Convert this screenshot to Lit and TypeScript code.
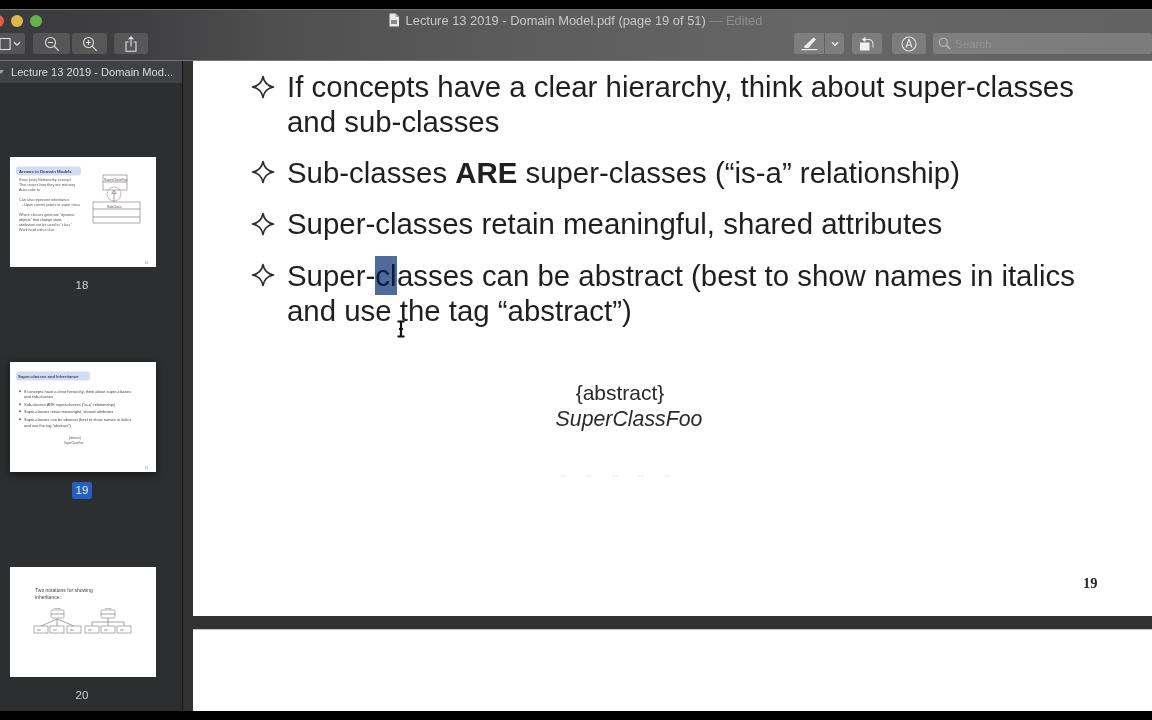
import { LitElement, html, css, svg } from "lit";
import { customElement } from "lit/decorators.js";

const star = html`<svg class="star" width="24" height="24" viewBox="0 0 24 24"><path d="M12 1.500Q13.600 10.400 22.500 12Q13.600 13.600 12 22.500Q10.400 13.600 1.500 12Q10.400 10.400 12 1.500Z" fill="none" stroke="#2b2b2b" stroke-width="1.600" stroke-linejoin="round"/></svg>`;

const box = (x: number, y: number, w: number, h: number, c = "#8b8b8b") =>
  svg`<rect x=${x} y=${y} width=${w} height=${h} fill="none" stroke=${c} stroke-width=".7"/>`;
const line = (x1: number, y1: number, x2: number, y2: number, c = "#7d7d7d") =>
  svg`<line x1=${x1} y1=${y1} x2=${x2} y2=${y2} stroke=${c} stroke-width=".7"/>`;
const t = (x: number, y: number, s: string, size = 3.9, fill = "#555", extra = "") =>
  svg`<text x=${x} y=${y} font-size=${size} fill=${fill} font-family="Liberation Sans, sans-serif" font-weight=${extra || "normal"}>${s}</text>`;

const thumb18 = svg`<svg class="thumb-art" width="146" height="110" viewBox="0 0 146 110">
  <rect x="6" y="9.500" width="65" height="9" rx="3" fill="#d3dcf2"/>
  ${t(9, 15.500, "Arrows in Domain Models", 4.3, "#3b4560", "bold")}
  ${t(9, 24, "Keep (use) Noteworthy concept", 3.7)}
  ${t(9, 29, "That reuses how they are text way", 3.7)}
  ${t(9, 34, "Auto-color to", 3.7)}
  ${t(9, 44, "Can also represent inheritance", 3.7)}
  ${t(12, 49, "- Upon correct points to super class", 3.7)}
  ${t(9, 59, "Where classes generate \u201Cdynamic", 3.7)}
  ${t(9, 64, "objects\u201D that change state,", 3.7, "#444")}
  ${t(9, 69, "attribution not be used to \u201Cclass\u201D", 3.7)}
  ${t(9, 74, "Work hard with a Use", 3.7)}
  ${box(93, 18, 24, 15)}
  ${t(94, 23.500, "SuperClassFoo", 3.400, "#555")}
  ${line(93, 25, 117, 25)}
  <circle cx="104" cy="37" r="7" fill="none" stroke="#c8a09a" stroke-width=".8"/>
  ${line(104, 33, 104, 45)}
  <path d="M101.500 36.500h5l-2.500-3z" fill="none" stroke="#777" stroke-width=".6"/>
  ${box(83, 45, 47, 21)}
  ${t(97, 50.500, "SubClass", 3.400)}
  ${line(83, 52, 130, 52)}
  ${line(83, 60, 130, 60)}
  ${t(135, 107, "18", 2.600, "#777")}
</svg>`;

const thumb19 = svg`<svg class="thumb-art" width="146" height="110" viewBox="0 0 146 110">
  <rect x="6" y="9.500" width="74" height="9" rx="3" fill="#d3dcf2"/>
  ${t(8, 15.500, "Super-classes and Inheritance", 4.200, "#3b4560", "bold")}
  ${[30, 43, 50, 58].map((y) => svg`<path d=${`M10 ${y - 2}l1.200 1.200-1.200 1.200-1.200-1.200z`} fill="#666"/>`)}
  ${t(14, 31, "If concepts have a clear hierarchy, think about super-classes", 4, "#444")}
  ${t(14, 36, "and sub-classes", 4, "#444")}
  ${t(14, 44, "Sub-classes ARE super-classes (\u201Cis-a\u201D relationship)", 4, "#444")}
  ${t(14, 51, "Super-classes retain meaningful, shared attributes", 4, "#444")}
  ${t(14, 59, "Super-classes can be abstract (best to show names in italics", 4, "#444")}
  ${t(14, 64.500, "and use the tag \u201Cabstract\u201D)", 4, "#444")}
  ${t(59, 77, "{abstract}", 2.800, "#555")}
  ${t(54, 82, "SuperClassFoo", 2.800, "#555")}
  ${t(135, 107, "19", 2.600, "#777")}
</svg>`;

const thumb20 = svg`<svg class="thumb-art" width="146" height="110" viewBox="0 0 146 110">
  ${t(25, 25, "Two notations for showing", 5, "#444")}
  ${t(25, 31.500, "inheritance:", 5, "#444")}
  <rect x="41" y="43" width="13" height="8" rx="1.500" fill="none" stroke="#8b8b8b" stroke-width=".7"/>
  <rect x="91" y="43" width="14" height="8" rx="1.500" fill="none" stroke="#8b8b8b" stroke-width=".7"/>
  ${t(43, 42, "Animal", 2.400)}
  ${t(94, 42, "Animal", 2.400)}
  ${line(41, 47, 54, 47)}
  ${line(91, 47, 105, 47)}
  ${line(47, 52, 31, 59)}
  ${line(47, 52, 47, 59)}
  ${line(47, 52, 64, 59)}
  ${line(98, 51, 98, 55)}
  ${line(82, 55, 114, 55)}
  ${line(82, 55, 82, 59)}
  ${line(98, 55, 98, 59)}
  ${line(114, 55, 114, 59)}
  ${[24, 40, 57, 75, 91, 107].map((x) => svg`${box(x, 59, 14, 7)}${t(x + 3, 64, "cat", 2.600, "#666")}`)}
</svg>`;

@customElement("app-root")
export class AppRoot extends LitElement {
  static styles = css`
    :host {
      display: flex;
      flex-direction: column;
      width: 1152px;
      height: 720px;
      overflow: hidden;
      background: #000;
      font-family: "Liberation Sans", Arial, sans-serif;
      position: relative;
    }
    .letterbox { height: 9px; flex: none; background: #000; }
    .chrome {
      flex: none;
      height: 52px;
      box-sizing: border-box;
      border-top: 1px solid #6e6e6e;
      border-bottom: 1px solid #777;
      background: linear-gradient(90deg, #3b3b3d 0, #3f3f41 12%, #4f4f50 24%, #5c5c5c 45%, #666 70%, #626262 100%);
      display: flex;
      flex-direction: column;
      filter: blur(0.3px);
    }
    .titlebar {
      height: 22px;
      flex: none;
      display: grid;
      grid-template-columns: 1fr auto 1fr;
      align-items: center;
    }
    .lights { display: flex; gap: 7px; margin-left: -8.500px; }
    .light { width: 12px; height: 12px; border-radius: 50%; }
    .red { background: #e2603f; }
    .yellow { background: #dcb943; }
    .green { background: #62b54a; }
    .doc-title {
      display: flex;
      align-items: center;
      gap: 6px;
      font-size: 12.900px;
      color: #c8c8c8;
      white-space: nowrap;
      margin: -2px 0 0 -2px;
    }
    .edited { color: #8e8e8e; }
    .toolbar {
      flex: 1;
      display: flex;
      align-items: flex-start;
      justify-content: space-between;
      padding-top: 1px;
    }
    .group { display: flex; align-items: center; }
    .btn {
      height: 21px;
      box-sizing: border-box;
      background: rgba(255, 255, 255, 0.13);
      border-radius: 3px;
      display: flex;
      align-items: center;
      justify-content: center;
      flex: none;
    }
    .btn svg { display: block; }
    .view-btn { width: 33px; margin-left: -8px; margin-right: 8px; justify-content: flex-end; padding-right: 4px; gap: 2px; }
    .zoom-out { width: 37px; margin-right: 2px; }
    .zoom-in { width: 35px; margin-right: 7px; }
    .share { width: 34px; }
    .pen { width: 50px; margin-right: 8px; justify-content: flex-start; background: rgba(255, 255, 255, 0.16); }
    .pen-main { width: 31px; height: 100%; display: flex; align-items: center; justify-content: center; border-right: 1px solid rgba(60,60,60,.45); box-sizing: border-box; }
    .pen-more { flex: 1; display: flex; align-items: center; justify-content: center; }
    .rotate { width: 30px; margin-right: 10px; background: rgba(255, 255, 255, 0.16); }
    .markup { width: 34px; margin-right: 7px; background: rgba(255, 255, 255, 0.16); }
    .search {
      width: 219px;
      justify-content: flex-start;
      padding-left: 5px;
      gap: 4px;
      font-size: 11.500px;
      color: #949494;
      background: rgba(255, 255, 255, 0.17);
    }
    .body { flex: 1; min-height: 0; display: flex; background: #323233; }
    .sidebar {
      width: 182px;
      flex: none;
      background: #2d2e30;
      display: flex;
      flex-direction: column;
      overflow: hidden;
    }
    .side-head {
      height: 22px;
      flex: none;
      box-sizing: border-box;
      padding-left: 11px;
      background: #404144;
      color: #dcdcdc;
      font-size: 11.100px;
      font-weight: 500;
      line-height: 22px;
      white-space: nowrap;
      filter: blur(0.3px);
      position: relative;
    }
    .disclosure {
      position: absolute;
      left: -2px;
      top: 9px;
      width: 0;
      height: 0;
      border-left: 3px solid transparent;
      border-right: 3px solid transparent;
      border-top: 4px solid #9a9a9a;
    }
    .thumbs {
      display: flex;
      flex-direction: column;
      gap: 95px;
      padding: 74px 0 0 10px;
    }
    .thumb { display: flex; flex-direction: column; width: 146px; align-items: center; }
    .sheet { width: 146px; height: 110px; background: #fff; flex: none; }
    .sheet.current { box-shadow: 0 2px 9px rgba(0, 0, 0, 0.55); }
    .thumb-art { display: block; filter: blur(0.65px); }
    .label {
      height: 17px;
      line-height: 17px;
      margin: 10px 0 -27px -2px;
      padding: 0 4px;
      font-size: 11.500px;
      color: #cfcfcf;
      border-radius: 2px;
      filter: blur(0.2px);
    }
    .label.current { background: #2260c2; color: #e8eefa; }
    .divider { width: 1px; flex: none; background: #151516; }
    .viewer {
      flex: 1;
      min-width: 0;
      padding-left: 10px;
      display: flex;
      flex-direction: column;
      gap: 13px;
      background: #323233;
    }
    .page { background: #fff; flex: none; }
    .slide {
      height: 555px;
      box-sizing: border-box;
      padding: 8px 0 0 58px;
      display: flex;
      flex-direction: column;
      position: relative;
      color: #1f1f1f;
      filter: blur(0.35px);
    }
    .page-two { flex: 1; border-top: 1px solid #c4c4c4; }
    .bullets { display: flex; flex-direction: column; gap: 16.500px; }
    .bullet { display: grid; grid-template-columns: 36px 1fr; }
    .bullet:first-child { margin-bottom: -1px; }
    .star { display: block; margin-top: 5.500px; }
    .text { font-size: 29.400px; line-height: 35px; white-space: nowrap; }
    .text b { font-weight: 700; }
    .sel { background: #4d6b9c; color: #0e1a33; padding: 3px 0.500px 3px 0; }
    .abstract-box {
      display: flex;
      flex-direction: column;
      align-items: center;
      margin-top: 51px;
      width: 756px;
      font-size: 21px;
      line-height: 27px;
      color: #2a2a2a;
    }
    .abstract-tag { margin-left: -18px; }
    .class-name { font-style: italic; font-size: 21.300px; }
    .ghost {
      display: flex;
      justify-content: space-between;
      width: 110px;
      margin: 42px 0 0 309px;
      height: 2px;
    }
    .ghost i { width: 6px; height: 2px; background: #f2f2f2; }
    .folio {
      margin: 98px 0 0 832px;
      font-family: "Liberation Serif", "Times New Roman", serif;
      font-weight: 700;
      font-size: 14.500px;
      line-height: 16px;
      color: #262626;
    }
    .cursor { position: absolute; left: 203px; top: 259px; display: block; }
  `;

  render() {
    return html`
      <div class="letterbox"></div>
      <header class="chrome">
        <div class="titlebar">
          <div class="lights">
            <span class="light red"></span><span class="light yellow"></span><span class="light green"></span>
          </div>
          <div class="doc-title">
            <svg width="12" height="14" viewBox="0 0 12 14"><path d="M1.500.5h6l3.500 3.500v9.500h-9.500z" fill="#e8e8e8"/><path d="M7.500.5v3.500h3.500" fill="#aaa"/><rect x="3" y="7" width="6" height="4" fill="#8a8a8a"/></svg>
            <span>Lecture 13 2019 - Domain Model.pdf (page 19 of 51) <span class="edited">— Edited</span></span>
          </div>
          <div></div>
        </div>
        <div class="toolbar">
          <div class="group">
            <div class="btn view-btn">
              <svg width="17" height="14" viewBox="0 0 17 14"><rect x=".6" y="1.500" width="15.500" height="11" fill="none" stroke="#ddd" stroke-width="1.100"/><line x1="6" y1="1.500" x2="6" y2="12.500" stroke="#ddd" stroke-width="1.100"/></svg>
              <svg width="8" height="6" viewBox="0 0 8 6"><path d="M1 1.200l3 3 3-3" fill="none" stroke="#ddd" stroke-width="1.300"/></svg>
            </div>
            <div class="btn zoom-out">
              <svg width="16" height="16" viewBox="0 0 16 16"><circle cx="6.500" cy="6.500" r="5" fill="none" stroke="#ddd" stroke-width="1.100"/><path d="M4 6.500h5M10.200 10.200l4.600 4.600" stroke="#ddd" stroke-width="1.200" fill="none"/></svg>
            </div>
            <div class="btn zoom-in">
              <svg width="16" height="16" viewBox="0 0 16 16"><circle cx="6.500" cy="6.500" r="5" fill="none" stroke="#ddd" stroke-width="1.100"/><path d="M4 6.500h5M6.500 4v5M10.200 10.200l4.600 4.600" stroke="#ddd" stroke-width="1.200" fill="none"/></svg>
            </div>
            <div class="btn share">
              <svg width="12" height="16" viewBox="0 0 12 16"><path d="M3.500 6H1v9.200h10V6H8.500M6 10.500V1M3.500 3.300L6 .8l2.500 2.500" fill="none" stroke="#e2e2e2" stroke-width="1.100"/></svg>
            </div>
          </div>
          <div class="group">
            <div class="btn pen">
              <div class="pen-main">
                <svg width="17" height="15" viewBox="0 0 17 15"><path d="M3 10.500L12.500 1.500l2.500 1.800L7.500 12H3.500z" fill="#ececec"/><rect x="0.500" y="13" width="16" height="1.200" fill="#ececec"/></svg>
              </div>
              <div class="pen-more"><svg width="8" height="6" viewBox="0 0 8 6"><path d="M1 1.200l3 3 3-3" fill="none" stroke="#eee" stroke-width="1.400"/></svg></div>
            </div>
            <div class="btn rotate">
              <svg width="16" height="15" viewBox="0 0 16 15"><rect x="1" y="6.500" width="9.500" height="8" fill="#f0f0f0"/><path d="M5 3.500h4.500c3 0 4.500 2 4.500 5v3" fill="none" stroke="#ddd" stroke-width="1.100"/><path d="M6.500 .8v5.400L2.800 3.500z" fill="#eee"/></svg>
            </div>
            <div class="btn markup">
              <svg width="16" height="16" viewBox="0 0 16 16"><circle cx="8" cy="8" r="7" fill="none" stroke="#e2e2e2" stroke-width="1.100"/><path d="M8 3.200L11 11.500M8 3.200L5 11.500M5.500 11c.3-2.600 5-2.600 5 0" fill="none" stroke="#e8e8e8" stroke-width="1.100"/></svg>
            </div>
            <div class="btn search">
              <svg width="13" height="13" viewBox="0 0 13 13"><circle cx="5.300" cy="5.300" r="4" fill="none" stroke="#bdbdbd" stroke-width="1.100"/><path d="M8.300 8.300l4 4" stroke="#bdbdbd" stroke-width="1.300"/></svg>
              <span>Search</span>
            </div>
          </div>
        </div>
      </header>
      <div class="body">
        <aside class="sidebar">
          <div class="side-head"><span class="disclosure"></span>Lecture 13 2019 - Domain Mod...</div>
          <div class="thumbs">
            <div class="thumb"><div class="sheet">${thumb18}</div><div class="label">18</div></div>
            <div class="thumb"><div class="sheet current">${thumb19}</div><div class="label current">19</div></div>
            <div class="thumb"><div class="sheet">${thumb20}</div><div class="label">20</div></div>
          </div>
        </aside>
        <div class="divider"></div>
        <main class="viewer">
          <section class="page slide">
            <div class="bullets">
              <div class="bullet">${star}<div class="text">If concepts have a clear hierarchy, think about super-classes<br />and sub-classes</div></div>
              <div class="bullet">${star}<div class="text">Sub-classes <b>ARE</b> super-classes (“is-a” relationship)</div></div>
              <div class="bullet">${star}<div class="text">Super-classes retain meaningful, shared attributes</div></div>
              <div class="bullet">${star}<div class="text">Super-<span class="sel">cl</span>asses can be abstract (best to show names in italics<br />and use the tag “abstract”)</div></div>
            </div>
            <div class="abstract-box">
              <span class="abstract-tag">{abstract}</span>
              <span class="class-name">SuperClassFoo</span>
            </div>
            <div class="ghost"><i></i><i></i><i></i><i></i><i></i></div>
            <div class="folio">19</div>
            <svg class="cursor" width="10" height="18" viewBox="0 0 10 18"><path d="M1.500 1.500h7M1.500 16.500h7M5 2v14M3 9h4" stroke="#111" stroke-width="2.200" fill="none"/></svg>
          </section>
          <section class="page page-two"></section>
        </main>
      </div>
      <div class="letterbox"></div>
    `;
  }
}
